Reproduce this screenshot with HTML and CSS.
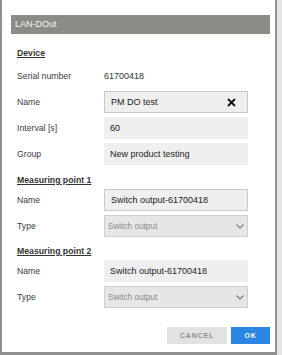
FILE: index.html
```html
<!DOCTYPE html>
<html lang="en">
<head>
    <meta charset="UTF-8">
    <meta name="viewport" content="width=device-width, initial-scale=1.0">
    <title>LAN-DOut</title>
    <link rel="stylesheet" href="styles.css">
</head>
<body>
    <div class="dialog">
        <div class="title-bar">LAN-DOut</div>

        <h3 class="heading heading-device">Device</h3>
        <div class="row row-serial">
            <span class="label">Serial number</span>
            <span class="value">61700418</span>
        </div>
        <div class="row">
            <span class="label">Name</span>
            <div class="field field-border">
                <span>PM DO test</span>
                <svg class="clear" width="9" height="9" viewBox="0 0 9 9">
                    <path d="M1 1 L8 8 M8 1 L1 8" stroke="#111" stroke-width="1.8" fill="none"/>
                </svg>
            </div>
        </div>
        <div class="row">
            <span class="label">Interval [s]</span>
            <div class="field">60</div>
        </div>
        <div class="row">
            <span class="label">Group</span>
            <div class="field">New product testing</div>
        </div>

        <h3 class="heading heading-point">Measuring point 1</h3>
        <div class="row row-first">
            <span class="label">Name</span>
            <div class="field field-border">Switch output-61700418</div>
        </div>
        <div class="row">
            <span class="label">Type</span>
            <div class="select">
                <span>Switch output</span>
                <svg width="8" height="5" viewBox="0 0 8 5">
                    <path d="M0.5 0.5 L4 4 L7.5 0.5" stroke="#777" stroke-width="1.1" fill="none"/>
                </svg>
            </div>
        </div>

        <h3 class="heading heading-point2">Measuring point 2</h3>
        <div class="row row-first">
            <span class="label">Name</span>
            <div class="field">Switch output-61700418</div>
        </div>
        <div class="row">
            <span class="label">Type</span>
            <div class="select">
                <span>Switch output</span>
                <svg width="8" height="5" viewBox="0 0 8 5">
                    <path d="M0.5 0.5 L4 4 L7.5 0.5" stroke="#777" stroke-width="1.1" fill="none"/>
                </svg>
            </div>
        </div>

        <div class="actions">
            <button class="btn btn-cancel">CANCEL</button>
            <button class="btn btn-ok">OK</button>
        </div>
    </div>
</body>
</html>
```

FILE: styles.css
```css
body {
    margin: 0;
    padding: 0;
    background-color: #e4e4e4;
    font-family: "Liberation Sans", Arial, sans-serif;
    color: #333;
}

.dialog {
    box-sizing: border-box;
    width: 277px;
    height: 355px;
    background-color: #fff;
    border-left: 2px solid #8f8f8f;
    border-right: 2px solid #8f8f8f;
    border-bottom: 3px solid #8f8f8f;
    padding: 15px 5px 0 9px;
    display: flex;
    flex-direction: column;
}

.title-bar {
    height: 19px;
    line-height: 19px;
    background-color: #8c8c86;
    color: #f4f4f4;
    font-size: 9px;
    padding-left: 4px;
}

.heading {
    margin: 0;
    height: 12px;
    line-height: 12px;
    font-size: 8.7px;
    font-weight: bold;
    text-decoration: underline;
    color: #333;
    padding-left: 6px;
}

.heading-device {
    margin-top: 13px;
}

.heading-point {
    margin-top: 9px;
}

.heading-point2 {
    margin-top: 8px;
}

.row {
    display: flex;
    align-items: center;
    height: 22px;
    margin-top: 4px;
}

.row-serial {
    height: 23px;
    margin-top: 5px;
}

.row-first {
    margin-top: 3px;
}

.label {
    width: 87px;
    padding-left: 6px;
    font-size: 8.7px;
    color: #3c3c3c;
}

.value {
    font-size: 9px;
    color: #333;
}

.field {
    box-sizing: border-box;
    width: 144px;
    height: 22px;
    background-color: #efefef;
    display: flex;
    align-items: center;
    justify-content: space-between;
    padding: 0 11px 0 6px;
    font-size: 9px;
    color: #222;
}

.field-border {
    border: 1px solid #c9c9c9;
    padding-left: 6px;
}

.select {
    box-sizing: border-box;
    width: 144px;
    height: 22px;
    background-color: #e6e6e6;
    border: 1px solid #cfcfcf;
    display: flex;
    align-items: center;
    justify-content: space-between;
    padding: 0 3px 0 3px;
    font-size: 8.2px;
    color: #8a8a8a;
}

.actions {
    display: flex;
    justify-content: flex-end;
    gap: 4px;
    margin-top: 19px;
}

.btn {
    height: 17px;
    border: none;
    font-family: "Liberation Sans", Arial, sans-serif;
    font-size: 7px;
    font-weight: bold;
    letter-spacing: 0.8px;
    padding: 0;
    cursor: pointer;
}

.btn-cancel {
    width: 60px;
    background-color: #e2e2e2;
    color: #8c8c8c;
}

.btn-ok {
    width: 39px;
    background-color: #2a86e2;
    color: #fff;
}
```
